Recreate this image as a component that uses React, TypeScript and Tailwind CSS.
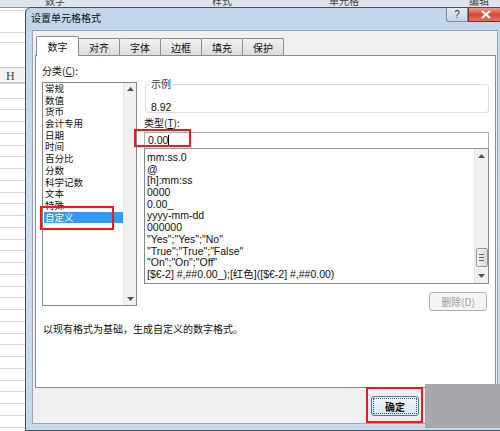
import React from "react";

const CJK = '"Noto Sans CJK SC", "Liberation Sans", sans-serif';

const categories = ["常规", "数值", "货币", "会计专用", "日期", "时间", "百分比", "分数", "科学记数", "文本", "特殊", "自定义"];
const formats = [
  "mm:ss.0",
  "@",
  "[h]:mm:ss",
  "0000",
  "0.00_",
  "yyyy-mm-dd",
  "000000",
  '"Yes";"Yes";"No"',
  '"True";"True";"False"',
  '"On";"On";"Off"',
  "[$€-2] #,##0.00_);[红色]([$€-2] #,##0.00)",
];

const tabs = ["数字", "对齐", "字体", "边框", "填充", "保护"];

function Up() {
  return (
    <svg width="7" height="4" viewBox="0 0 7 4">
      <path d="M0 4 L3.5 0 L7 4 Z" fill="#555" />
    </svg>
  );
}
function Down() {
  return (
    <svg width="7" height="4" viewBox="0 0 7 4">
      <path d="M0 0 L3.5 4 L7 0 Z" fill="#555" />
    </svg>
  );
}

export default function App() {
  const gridLines = [10, 32, 42, 67, 83];
  for (let y = 97.5; y < 431; y += 11.75) gridLines.push(y);
  return (
    <div
      className="relative w-[500px] h-[431px] overflow-hidden bg-white"
      style={{ fontFamily: CJK }}
    >
      {/* spreadsheet background */}
      <div className="absolute left-0 top-0 w-[500px] h-[8px] bg-[#dde5ee] border-b border-[#8f98a4] overflow-hidden">
        <div className="flex text-[10px] text-[#444] leading-[10px] -mt-[4px]">
          <span className="ml-[45px]">数字</span>
          <span className="ml-[147px]">样式</span>
          <span className="ml-[97px]">单元格</span>
          <span className="ml-[110px]">编辑</span>
        </div>
      </div>
      {gridLines.map((y, i) => (
        <div key={i} className="absolute left-0 w-[30px] h-px bg-[#d4d4d4]" style={{ top: y }} />
      ))}
      <div className="absolute left-0 top-[67px] w-[30px] h-[16px] bg-[#f3f3f3] border-y border-[#c6c6c6]" />
      <div
        className="absolute left-[6px] top-[70px] text-[12px] leading-[12px] text-[#444]"
        style={{ fontFamily: '"Liberation Serif", serif' }}
      >
        H
      </div>

      {/* dialog */}
      <div className="absolute left-[25px] top-[7px] w-[478px] h-[424px] rounded-tl-[6px] border border-[#4a4f57] bg-gradient-to-b from-[#c2d6ec] via-[#cddfef] to-[#c6d9ed] flex flex-col">
        {/* title bar */}
        <div className="relative h-[22px] flex items-center pl-[5px] pb-[3px]">
          <span className="text-[10px] text-[#111]">设置单元格格式</span>
          <div className="absolute right-[34px] top-0 w-[22px] h-[14px] border border-[#7e8a9a] border-t-0 rounded-bl-[3px] bg-gradient-to-b from-[#e3ecf6] to-[#c3d3e6] flex items-center justify-center">
            <span className="text-[10px] leading-[10px] text-[#333]" style={{ fontFamily: '"Liberation Sans", sans-serif' }}>?</span>
          </div>
          <div className="absolute right-0 top-0 w-[34px] h-[14px] border border-[#7a3030] border-t-0 border-r-0 bg-gradient-to-b from-[#e89a8a] via-[#d44a3a] to-[#e0705e] flex items-center justify-center">
            <svg width="10" height="9" viewBox="0 0 10 9">
              <path d="M1 1 L9 8 M9 1 L1 8" stroke="#fff" strokeWidth="2.2" />
            </svg>
          </div>
        </div>
        {/* client area */}
        <div className="ml-[6px] mr-[4px] h-[394px] bg-[#f0f0f0] border border-[#9aa6b6] flex flex-col">
          {/* tabs */}
          <div className="flex items-end pl-[3px] pt-[4px] h-[24px]">
            {tabs.map((t, i) =>
              i === 0 ? (
                <div
                  key={t}
                  className="relative z-10 w-[43px] h-[20px] -mb-px bg-white border border-[#898c95] border-b-0 rounded-t-[2px] flex items-center justify-center text-[10px] text-[#111]"
                >
                  {t}
                </div>
              ) : (
                <div
                  key={t}
                  className="w-[42px] h-[17px] -ml-px bg-gradient-to-b from-[#f2f2f2] to-[#dcdcdc] border border-[#8e8f8f] border-b-0 rounded-t-[2px] flex items-center justify-center text-[10px] text-[#111]"
                >
                  {t}
                </div>
              )
            )}
          </div>
          {/* panel */}
          <div className="ml-[2px] w-[461px] h-[333px] bg-white border border-[#898c95] flex flex-col px-[6px] pt-[8px]">
            <div className="flex gap-[7px]">
              {/* left col */}
              <div className="w-[96px] flex flex-col">
                <div className="h-[14px] text-[10px] leading-[14px] text-[#111]">
                  分类(<span className="underline">C</span>):
                </div>
                <div className="mt-[4px] h-[224px] border border-[#828790] flex">
                  <div className="flex-1 flex flex-col pl-px">
                    {categories.map((c) => (
                      <div
                        key={c}
                        className={
                          c === "自定义"
                            ? "h-[11.7px] leading-[11.7px] text-[9.5px] pl-[1px] bg-[#3399ff] text-white"
                            : "h-[11.7px] leading-[11.7px] text-[9.5px] pl-[1px] text-[#111]"
                        }
                      >
                        {c}
                      </div>
                    ))}
                  </div>
                  <div className="w-[13px] bg-[#f0f0f0] border-l border-[#e4e4e4] flex flex-col items-center justify-between py-[4px]">
                    <Up />
                    <Down />
                  </div>
                </div>
              </div>
              {/* right col */}
              <div className="w-[347px] flex flex-col">
                <div className="relative mt-[20px] ml-px w-[344px] h-[29px] border border-[#d5dfe5] rounded-[3px] pl-[5px] pt-[7px]">
                  <span className="absolute left-[4px] -top-[7px] bg-white px-px text-[10px] leading-[12px] text-[#333]">示例</span>
                  <span className="text-[10.5px] leading-[13px] text-[#111]" style={{ fontFamily: '"Liberation Sans", sans-serif' }}>8.92</span>
                </div>
                <div className="mt-[4px] h-[12px] text-[10px] leading-[12px] text-[#111]">
                  类型(<span className="underline">T</span>):
                </div>
                <div className="mt-[3px] h-[17px] border border-[#abadb3] border-b-[#8d99a6] bg-white pl-[3px] flex items-center">
                  <span className="text-[10.5px] text-[#111]" style={{ fontFamily: '"Liberation Sans", sans-serif' }}>0.00</span>
                  <span className="w-px h-[11px] bg-black" />
                </div>
                <div className="h-[135px] border border-t-0 border-[#828790] flex">
                  <div className="flex-1 flex flex-col pt-[3px] pl-[2px]">
                    {formats.map((f) => (
                      <div
                        key={f}
                        className="h-[11.7px] leading-[11.7px] text-[10.5px] text-[#111] whitespace-nowrap"
                        style={{ fontFamily: '"Liberation Sans", "Noto Sans CJK SC", sans-serif' }}
                      >
                        {f}
                      </div>
                    ))}
                  </div>
                  <div className="w-[14px] bg-[#f0f0f0] border-l border-[#e4e4e4] flex flex-col items-center py-[5px]">
                    <Up />
                    <div className="flex-1" />
                    <div className="w-[12px] h-[19px] mb-[7px] border border-[#979797] rounded-[2px] bg-gradient-to-r from-[#f4f4f4] to-[#dadada] flex flex-col items-center justify-center gap-[2px]">
                      <div className="w-[5px] h-px bg-[#666]" />
                      <div className="w-[5px] h-px bg-[#666]" />
                      <div className="w-[5px] h-px bg-[#666]" />
                    </div>
                    <Down />
                  </div>
                </div>
                <div className="flex justify-end mt-[8px] pr-[2px]">
                  <div className="w-[58px] h-[19px] border border-[#adb2b5] rounded-[3px] bg-[#f4f4f4] flex items-center justify-center text-[10px] text-[#a0a0a0]">
                    删除(D)
                  </div>
                </div>
              </div>
            </div>
            <div className="mt-[12px] ml-px text-[10px] leading-[12px] text-[#111]">
              以现有格式为基础，生成自定义的数字格式。
            </div>
          </div>
          {/* footer */}
          <div className="flex pl-[338px] pt-[8px]">
            <div className="w-[48px] h-[20px] border border-[#3c7fb1] rounded-[3px] bg-gradient-to-b from-[#f2f8fd] to-[#d6e6f3] p-[1px]">
              <div className="w-full h-full border border-dotted border-[#555] flex items-center justify-center text-[10px] font-bold text-[#111]">
                确定
              </div>
            </div>
          </div>
        </div>
      </div>

      {/* overlays: red highlight boxes */}
      <div className="absolute left-[40px] top-[206px] w-[74px] h-[24px] border-2 border-[#f01818]" />
      <div className="absolute left-[134px] top-[129px] w-[57px] h-[18px] border-2 border-[#f01818]" />
      <div className="absolute left-[366px] top-[387px] w-[57px] h-[36px] border-2 border-[#f01818]" />
      {/* gray cover */}
      <div className="absolute left-[425px] top-[384px] w-[75px] h-[44px] bg-[#a8a8ab]" />
    </div>
  );
}
